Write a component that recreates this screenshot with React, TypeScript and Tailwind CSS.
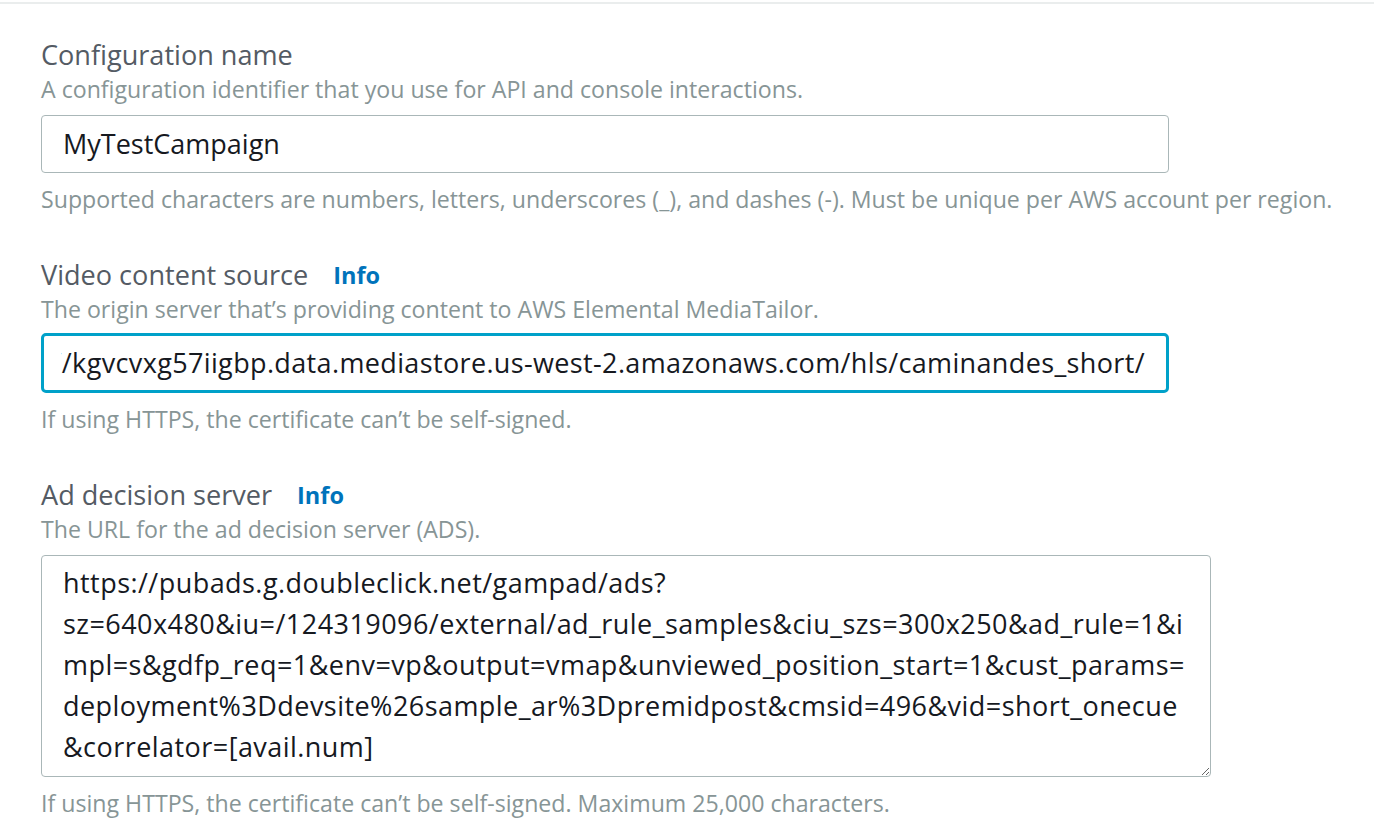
import React from 'react'

const adsUrl = [
  'https://pubads.g.doubleclick.net/gampad/ads?',
  'sz=640x480&iu=/124319096/external/ad_rule_samples&ciu_szs=300x250&ad_rule=1&i',
  'mpl=s&gdfp_req=1&env=vp&output=vmap&unviewed_position_start=1&cust_params=',
  'deployment%3Ddevsite%26sample_ar%3Dpremidpost&cmsid=496&vid=short_onecue',
  '&correlator=[avail.num]',
].join('\n')

function Label({ text, info }: { text: string; info?: boolean }) {
  return (
    <div className="flex items-center h-[34px] leading-[34px]">
      <span className="text-[27.1px] text-[#545b64]">{text}</span>
      {info && <a className="ml-[25px] text-[23.5px] font-bold text-[#0073bb]">Info</a>}
    </div>
  )
}

function Hint({ text }: { text: string }) {
  return <p className="h-[34px] leading-[34px] text-[23.15px] text-[#879596]">{text}</p>
}

export default function App() {
  return (
    <div className="min-h-screen bg-white font-['Open_Sans',sans-serif]">
      <div className="mt-[2px] h-[2px] bg-[#eaeded]" />

      <div className="pl-[41px] pt-[34px]">
        <Label text="Configuration name" />
        <Hint text="A configuration identifier that you use for API and console interactions." />
        <div className="mt-[9px] w-[1128px] h-[58px] rounded-[4px] border border-[#aab7b8] pl-[21px] flex items-center text-[27px] text-[#16191f]">
          MyTestCampaign
        </div>
        <div className="mt-[9px]">
          <Hint text="Supported characters are numbers, letters, underscores (_), and dashes (-). Must be unique per AWS account per region." />
        </div>

        <div className="mt-[42px]">
          <Label text="Video content source" info />
          <Hint text="The origin server that’s providing content to AWS Elemental MediaTailor." />
        </div>
        <div className="mt-[7px] w-[1128px] h-[60px] rounded-[5px] border-[3px] border-[#00a1c9] pr-[21px] flex items-center text-[27px] tracking-[0.36px] text-[#16191f]">
          <div className="ml-[17px] flex-1 flex justify-end overflow-hidden whitespace-nowrap">
            <span>https://kgvcvxg57iigbp.data.mediastore.us-west-2.amazonaws.com/hls/caminandes_short/</span>
          </div>
        </div>
        <div className="mt-[9px]">
          <Hint text="If using HTTPS, the certificate can’t be self-signed." />
        </div>

        <div className="mt-[42px]">
          <Label text="Ad decision server" info />
          <Hint text="The URL for the ad decision server (ADS)." />
        </div>
        <textarea
          readOnly
          value={adsUrl}
          className="mt-[9px] block w-[1170px] h-[222px] rounded-[4px] border border-[#aab7b8] pl-[21px] pr-[10px] pt-[6px] whitespace-pre overflow-hidden text-[27px] leading-[41px] tracking-[0.45px] text-[#16191f] outline-none"
        />
        <div className="mt-[9px]">
          <Hint text="If using HTTPS, the certificate can’t be self-signed. Maximum 25,000 characters." />
        </div>
      </div>
    </div>
  )
}
